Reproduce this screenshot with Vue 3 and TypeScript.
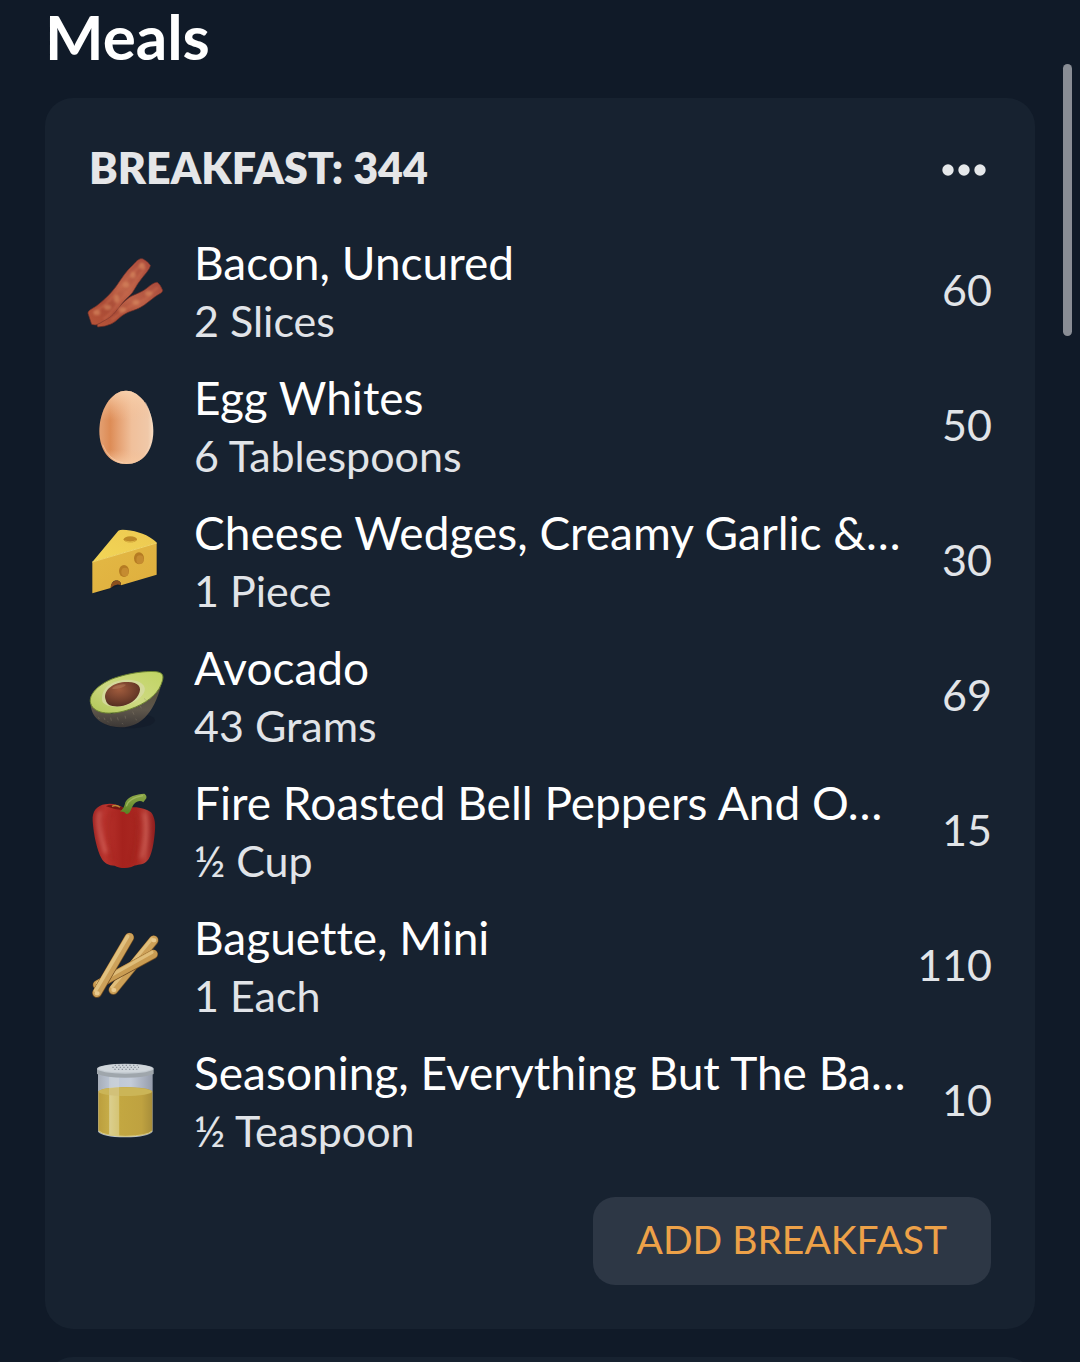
<script setup lang="ts">
interface Food {
  icon: string
  viewBox: string
  name: string
  amount: string
  calories: number
}

const foods: Food[] = [
  { icon: 'bacon', viewBox: '30 36 240 240', name: 'Bacon, Uncured', amount: '2 Slices', calories: 60 },
  { icon: 'egg', viewBox: '30 36 240 240', name: 'Egg Whites', amount: '6 Tablespoons', calories: 50 },
  { icon: 'cheese', viewBox: '30 36 240 240', name: 'Cheese Wedges, Creamy Garlic &…', amount: '1 Piece', calories: 30 },
  { icon: 'avocado', viewBox: '30 36 240 240', name: 'Avocado', amount: '43 Grams', calories: 69 },
  { icon: 'pepper', viewBox: '30 51 240 240', name: 'Fire Roasted Bell Peppers And O…', amount: '½ Cup', calories: 15 },
  { icon: 'bread', viewBox: '30 51 240 240', name: 'Baguette, Mini', amount: '1 Each', calories: 110 },
  { icon: 'shaker', viewBox: '30 51 240 240', name: 'Seasoning, Everything But The Ba…', amount: '½ Teaspoon', calories: 10 },
]
</script>

<template>
  <main class="page">
    <h1 class="title">Meals</h1>

    <section class="card" aria-labelledby="breakfast">
      <header class="card-head">
        <h2 id="breakfast">BREAKFAST: 344</h2>
        <button class="more" type="button" aria-label="More options">
          <svg viewBox="0 0 44 12" width="44" height="12" fill="currentColor">
            <circle cx="6" cy="6" r="5.7" /><circle cx="22" cy="6" r="5.7" /><circle cx="38" cy="6" r="5.7" />
          </svg>
        </button>
      </header>

      <ul class="foods">
        <li v-for="food in foods" :key="food.name" class="food">
          <svg class="icon" :viewBox="food.viewBox" aria-hidden="true">
            <g v-if="food.icon === 'bacon'">
              <defs>
                <linearGradient id="bc" x1="0" y1="1" x2="1" y2="0">
                  <stop offset="0" stop-color="#b85538" /><stop offset=".3" stop-color="#a84a36" />
                  <stop offset=".55" stop-color="#bd6248" /><stop offset="1" stop-color="#a9493b" />
                </linearGradient>
                <filter id="bb" x="-.2" y="-.2" width="1.4" height="1.4"><feGaussianBlur stdDeviation="3" /></filter>
              </defs>
              <path d="M68 261C61 247 79 241 96 229C126 209 137 193 157 177C174 162 194 162 216 144C230 133 240 126 247 127Q256 133 263 151C262 160 251 162 239 171C222 184 212 193 198 201C179 212 170 211 151 221C131 232 127 243 108 252Q91 260 68 261Z" fill="url(#bc)" stroke="#6f2d24" stroke-width="2" />
              <path d="M39 220C38 210 56 205 68 195C93 175 110 158 127 134C142 113 153 94 173 76C187 60 194 54 204 57Q217 63 226 76C225 88 208 105 195 122C181 139 178 154 162 169C145 183 138 196 121 216C106 235 91 239 76 249Q63 259 50 253Z" fill="url(#bc)" stroke="#79342a" stroke-width="2" />
              <g filter="url(#bb)">
                <path d="M54 219C88 200 111 178 136 143S173 101 203 70M86 237C118 216 128 188 149 166S178 126 211 82M109 239C141 219 168 191 196 184S225 155 250 142" fill="none" stroke="#ca6b4d" stroke-width="7" opacity=".6" />
                <g fill="#d98b60" opacity=".6">
                  <ellipse cx="66" cy="218" rx="10" ry="8" /><ellipse cx="98" cy="202" rx="11" ry="8" /><ellipse cx="125" cy="176" rx="8" ry="12" />
                  <ellipse cx="153" cy="134" rx="10" ry="9" /><ellipse cx="174" cy="105" rx="8" ry="10" /><ellipse cx="201" cy="78" rx="9" ry="10" />
                  <ellipse cx="142" cy="209" rx="11" ry="8" /><ellipse cx="183" cy="187" rx="10" ry="8" /><ellipse cx="221" cy="160" rx="11" ry="8" />
                </g>
              </g>
            </g>

            <g v-else-if="food.icon === 'egg'">
              <defs>
                <linearGradient id="eg" x1="0" y1="0" x2="1" y2="0">
                  <stop offset="0" stop-color="#e3a072" /><stop offset=".2" stop-color="#dd8c56" /><stop offset=".35" stop-color="#e5a071" />
                  <stop offset=".6" stop-color="#f0c09b" /><stop offset=".9" stop-color="#f0c8a8" /><stop offset="1" stop-color="#f7dcc2" />
                </linearGradient>
                <linearGradient id="eh" x1="0" y1="0" x2="0" y2="1">
                  <stop offset="0" stop-color="#f9d3af" stop-opacity=".9" /><stop offset=".4" stop-color="#f5c29a" stop-opacity="0" />
                  <stop offset=".8" stop-color="#f5bd92" stop-opacity="0" /><stop offset="1" stop-color="#f6c9a2" stop-opacity=".9" />
                </linearGradient>
              </defs>
              <path d="M153 47C197 47 235 105 235 168C235 230 201 267 154 267C107 267 73 230 73 168C73 105 109 47 153 47Z" fill="url(#eg)" />
              <path d="M153 47C197 47 235 105 235 168C235 230 201 267 154 267C107 267 73 230 73 168C73 105 109 47 153 47Z" fill="url(#eh)" />
              <path d="M83 209Q102 257 145 264M211 82Q231 118 232 166Q230 212 209 239" fill="none" stroke="#f9dcc1" stroke-width="3" opacity=".5" />
            </g>

            <g v-else-if="food.icon === 'cheese'">
              <defs>
                <linearGradient id="ct" x1="0" y1="1" x2="1" y2="0"><stop offset="0" stop-color="#f2d656" /><stop offset="1" stop-color="#edc851" /></linearGradient>
                <linearGradient id="cf" x1="0" y1="0" x2="1" y2="1"><stop offset="0" stop-color="#e3b945" /><stop offset="1" stop-color="#dfae3d" /></linearGradient>
              </defs>
              <path d="M244 102L250 192L110 235L60 252Z" fill="#0e1622" opacity=".4" />
              <path d="M52 156L130 62Q136 58 154 60C187 63 222 76 241 94L245 99Z" fill="url(#ct)" />
              <path d="M52 156L245 98V194L138 226C139 213 128 209 117 213Q109 218 107 234L52 250Z" fill="url(#cf)" />
              <path d="M52 156L245 99" stroke="#f3d76a" stroke-width="3" />
              <path d="M107 234C107 213 127 205 136 217L138 226Q123 218 107 234Z" fill="#8b4f1d" />
              <ellipse cx="166" cy="88" rx="20" ry="9" fill="#bd8928" /><path d="M148 91Q166 98 185 90Q178 97 166 97Q153 97 148 91Z" fill="#e3bd48" />
              <ellipse cx="147" cy="183" rx="15" ry="18" fill="#b57b23" /><ellipse cx="150" cy="186" rx="11" ry="13" fill="#c58b30" />
              <ellipse cx="192" cy="145" rx="15" ry="18" fill="#b57b23" /><ellipse cx="195" cy="149" rx="11" ry="13" fill="#c58b30" />
            </g>

            <g v-else-if="food.icon === 'avocado'">
              <defs>
                <linearGradient id="as" x1="0" y1="0" x2="0" y2="1"><stop offset="0" stop-color="#514c35" /><stop offset=".65" stop-color="#5e564b" /><stop offset="1" stop-color="#3b3735" /></linearGradient>
                <radialGradient id="ap" cx=".4" cy=".3" r=".7"><stop offset="0" stop-color="#a15c3d" /><stop offset=".5" stop-color="#7d4630" /><stop offset="1" stop-color="#572f21" /></radialGradient>
                <linearGradient id="af" x1="0" y1="1" x2="1" y2="0"><stop offset="0" stop-color="#b0c656" /><stop offset=".45" stop-color="#ced982" /><stop offset="1" stop-color="#c0d462" /></linearGradient>
              </defs>
              <ellipse cx="160" cy="226" rx="80" ry="24" fill="#0d1520" opacity=".3" />
              <path d="M46 170C47 217 79 243 135 247C201 248 244 197 263 99L230 155L110 207Z" fill="url(#as)" />
              <path d="M47 175C39 149 71 116 119 99C157 86 207 77 244 80C265 83 269 93 258 119C246 150 210 177 166 192C116 211 57 210 47 175Z" fill="url(#af)" stroke="#6e8532" stroke-width="3" />
              <path d="M83 172C71 128 120 98 170 105C209 110 224 133 193 160C162 187 104 195 83 172Z" fill="#d6dba1" opacity=".85" />
              <path d="M91 161C85 132 121 109 159 111C191 111 203 128 190 150C175 177 142 188 112 183Q95 180 91 161Z" fill="url(#ap)" />
              <ellipse cx="132" cy="125" rx="21" ry="5" transform="rotate(-15 132 125)" fill="#d0a078" opacity=".3" />
              <path d="M70 217l3 5m14-4l3 7m17-7l2 9m18-10l3 9m20-14l2 9m21-21l4 9m19-26l3 7m9-30l4 6M98 229l3 3m40 2l3 4m38-17l3 5" stroke="#8d8270" stroke-width="3" opacity=".4" />
            </g>

            <g v-else-if="food.icon === 'pepper'">
              <defs>
                <linearGradient id="pr" x1="0" y1="0" x2="1" y2="0">
                  <stop offset="0" stop-color="#a02523" /><stop offset=".2" stop-color="#b8332d" /><stop offset=".48" stop-color="#a5221d" />
                  <stop offset=".7" stop-color="#a92721" /><stop offset=".85" stop-color="#b53b34" /><stop offset="1" stop-color="#8e1c1d" />
                </linearGradient>
                <linearGradient id="pg" x1="0" y1="0" x2="0" y2="1"><stop offset="0" stop-color="#8fa94a" /><stop offset="1" stop-color="#588222" /></linearGradient>
                <filter id="pb" x="-1" y="-.2" width="3" height="1.4"><feGaussianBlur stdDeviation="6" /></filter>
              </defs>
              <path d="M53 137C51 109 66 91 91 88C106 84 132 88 149 101C181 91 211 100 228 112C241 128 242 151 239 177C235 216 228 254 209 264C196 271 183 268 169 276C151 282 132 279 119 272C101 272 86 264 79 249C67 228 56 181 53 137Z" fill="url(#pr)" />
              <path d="M93 94Q106 84 146 98L140 105Q116 103 93 94Z" fill="#761713" />
              <path d="M111 94Q124 88 135 97" fill="none" stroke="#b98937" stroke-width="4" />
              <path d="M76 109C63 129 75 187 93 234" fill="none" stroke="#de756c" stroke-width="12" opacity=".6" filter="url(#pb)" />
              <path d="M207 114C220 151 212 204 199 250" fill="none" stroke="#d9756b" stroke-width="10" opacity=".6" filter="url(#pb)" />
              <path d="M109 112C91 140 101 213 113 257M180 115C193 153 178 226 169 262" fill="none" stroke="#841512" stroke-width="6" opacity=".3" filter="url(#pb)" />
              <path d="M135 110Q148 100 151 82C158 65 184 57 208 56Q216 61 214 70L205 82Q197 75 186 80C174 86 172 97 166 108Q162 119 154 117Q147 108 135 110Z" fill="url(#pg)" />
              <path d="M154 94Q160 70 204 62" fill="none" stroke="#b2c66f" stroke-width="4" opacity=".65" />
            </g>

            <g v-else-if="food.icon === 'bread'" stroke-linecap="round">
              <path d="M115 240L236 91" stroke="#815b29" stroke-width="29" />
              <path d="M115 239L236 90" stroke="#cda158" stroke-width="26" />
              <path d="M111 231L230 87" stroke="#e0bf7c" stroke-width="10" />
              <path d="M67 225L235 133" stroke="#704c22" stroke-width="28" />
              <path d="M67 224L235 132" stroke="#c99c52" stroke-width="25" />
              <path d="M67 219L231 127" stroke="#dfbd79" stroke-width="10" />
              <path d="M66 249L163 83" stroke="#785020" stroke-width="29" />
              <path d="M66 248L163 82" stroke="#cca15a" stroke-width="26" />
              <path d="M62 241L158 79" stroke="#e1c17f" stroke-width="11" />
              <path d="M65 250h3M115 240h3M235 91h3" stroke="#e9ca8e" stroke-width="12" />
            </g>

            <g v-else>
              <defs>
                <linearGradient id="sg" x1="0" y1="0" x2="1" y2="0">
                  <stop offset="0" stop-color="#a6adb8" /><stop offset=".25" stop-color="#bdc7d6" /><stop offset=".6" stop-color="#c4ccd9" /><stop offset="1" stop-color="#959cab" />
                </linearGradient>
                <linearGradient id="sf" x1="0" y1="0" x2="1" y2="0">
                  <stop offset="0" stop-color="#bb9e3d" /><stop offset=".2" stop-color="#c6ac48" /><stop offset=".21" stop-color="#d7c773" />
                  <stop offset=".38" stop-color="#cfb952" /><stop offset=".4" stop-color="#c3a741" /><stop offset=".8" stop-color="#bfa240" /><stop offset="1" stop-color="#a88e3a" />
                </linearGradient>
              </defs>
              <path d="M69 84H233V260Q221 276 151 277Q81 276 69 260Z" fill="url(#sg)" />
              <path d="M70 139Q84 127 151 126Q218 127 232 139V257Q220 273 151 274Q82 273 70 257Z" fill="url(#sf)" />
              <ellipse cx="151" cy="140" rx="80" ry="13" fill="#cbb557" />
              <path d="M102 94L132 96V274L102 270Z" fill="#e6e8df" opacity=".25" />
              <path d="M66 71V87Q91 98 151 98Q212 98 236 87V71Z" fill="#9fa6ac" />
              <ellipse cx="151" cy="71" rx="85" ry="15" fill="#c3cad0" /><ellipse cx="151" cy="70" rx="80" ry="12" fill="#d0d6db" />
              <g fill="none" stroke="#8b939d" stroke-width="4" stroke-dasharray="4 7"><path d="M119 61H188M112 67H192M118 73H187" /></g>
              <path d="M72 258Q84 272 151 274Q219 272 231 258" fill="none" stroke="#d7ca82" stroke-width="3" />
            </g>
          </svg>
          <div class="text">
            <p class="name">{{ food.name }}</p>
            <p class="amount">{{ food.amount }}</p>
          </div>
          <span class="calories">{{ food.calories }}</span>
        </li>
      </ul>

      <button class="add" type="button">ADD BREAKFAST</button>
    </section>

    <div class="next">
      <div class="next-card"></div>
    </div>
    <div class="scrollbar" aria-hidden="true"></div>
  </main>
</template>

<style>
body {
  background: #101a28;
}
</style>

<style scoped>
.page {
  position: relative;
  box-sizing: border-box;
  display: flex;
  flex-direction: column;
  min-height: 100vh;
  padding: 0 45px;
  background: #101a28;
  color: #fff;
  font-family: Lato, "Noto Sans", sans-serif;
  font-variant-ligatures: none;
}
h1, h2, p, ul {
  margin: 0;
  padding: 0;
}
.title {
  height: 98px;
  font-size: 62px;
  line-height: 72px;
  font-weight: 700;
}
.card {
  display: flex;
  flex-direction: column;
  padding: 40px 43px 44px 40px;
  border-radius: 28px;
  background: #172230;
}
.card-head {
  display: flex;
  align-items: center;
  justify-content: space-between;
  height: 64px;
  padding: 0 1px 0 4px;
  color: #e5e6e8;
}
.card-head h2 {
  padding-bottom: 4px;
  font-size: 43px;
  line-height: 60px;
  font-weight: 800;
}
.more {
  display: flex;
  padding: 12px 5px;
  border: 0;
  background: none;
  color: #e5e8ea;
}
.foods {
  margin-top: 22px;
  list-style: none;
}
.food {
  display: flex;
  align-items: center;
  height: 135px;
}
.icon {
  flex: none;
  width: 80px;
  height: 80px;
}
.text {
  flex: 1;
  min-width: 0;
  margin-left: 29px;
}
.name, .amount {
  overflow: hidden;
  line-height: 58px;
  white-space: nowrap;
}
.name {
  font-size: 46px;
}
.amount {
  font-size: 43px;
  color: #e1e4e8;
}
.calories {
  flex: none;
  padding-bottom: 4px;
  font-size: 43px;
  color: #e1e4e8;
}
.add {
  align-self: flex-end;
  height: 88px;
  margin: 28px 1px 0 0;
  padding: 0 44px 4px;
  border: 0;
  border-radius: 22px;
  background: #2d3745;
  color: #eda148;
  font: 400 39px/84px Lato, "Noto Sans", sans-serif;
}
.next {
  flex: 1 0 6px;
  height: 6px;
  margin-top: 28px;
  overflow: hidden;
}
.next-card {
  height: 56px;
  border-radius: 28px;
  background: #172230;
}
.scrollbar {
  position: absolute;
  top: 64px;
  right: 8px;
  width: 9px;
  height: 272px;
  border-radius: 5px;
  background: #898d95;
}
</style>
